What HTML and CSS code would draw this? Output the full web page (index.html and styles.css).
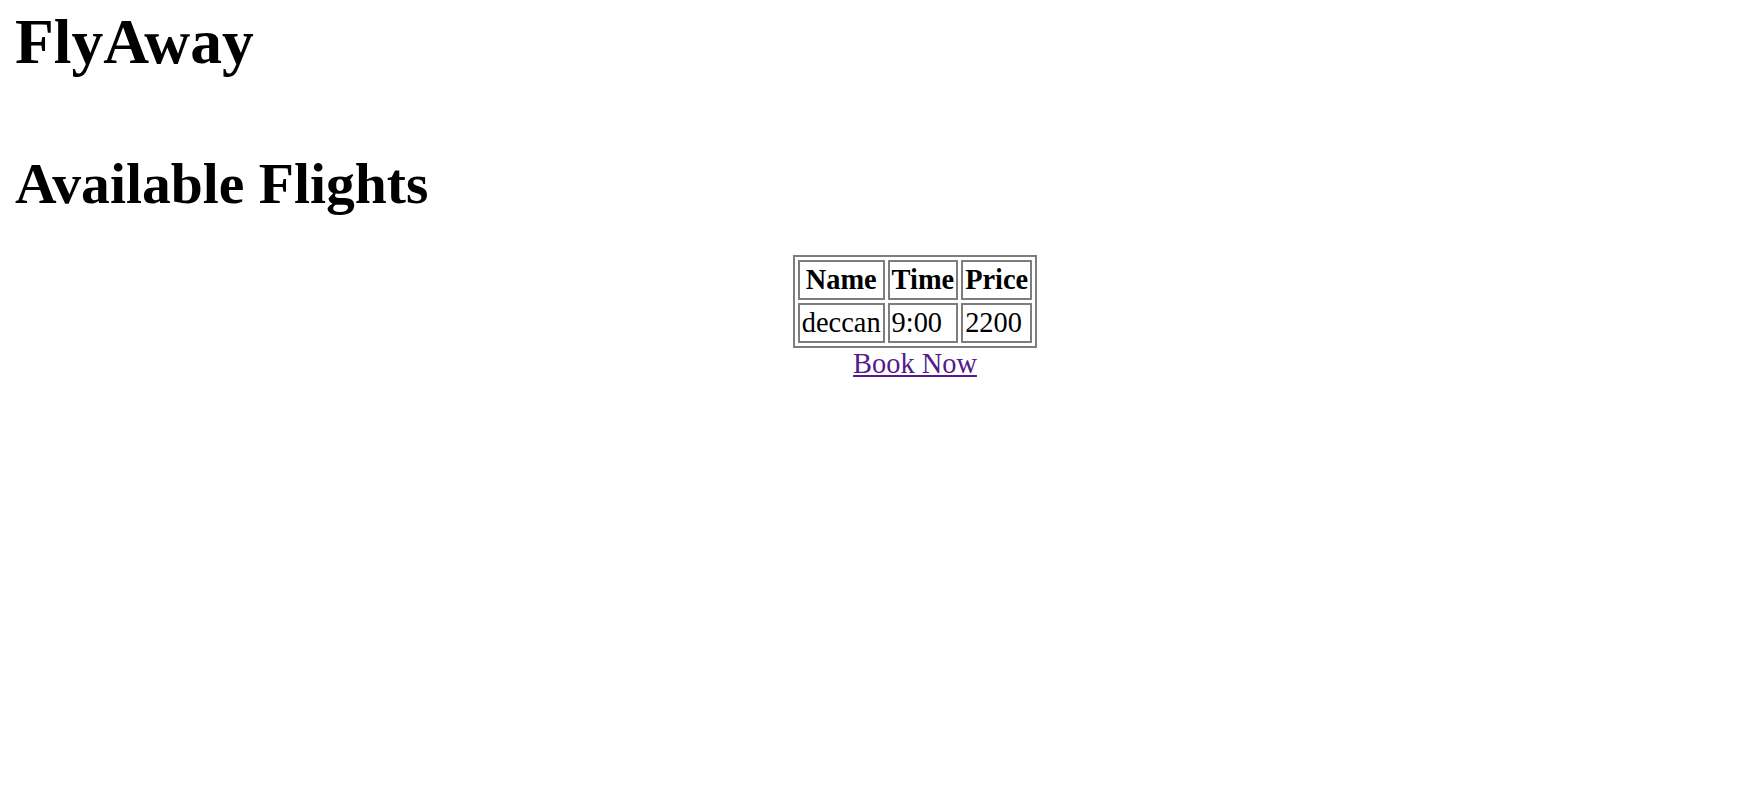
FILE: index.html
```html
<!DOCTYPE html>
<html>
<head>
<meta charset="utf-8">
<title>FlyAway</title>
<link rel="stylesheet" href="styles.css">
</head>
<body>
<div class="page">
  <h1 class="brand">FlyAway</h1>
  <h1 class="title">Available Flights</h1>
  <div class="flights">
    <table class="flight-table">
      <tr>
        <th>Name</th>
        <th>Time</th>
        <th>Price</th>
      </tr>
      <tr>
        <td>deccan</td>
        <td>9:00</td>
        <td>2200</td>
      </tr>
    </table>
    <a class="book" href="#">Book Now</a>
  </div>
</div>
</body>
</html>
```

FILE: styles.css
```css
html, body {
  margin: 0;
  padding: 0;
  background: #ffffff;
}

body {
  font-family: "Liberation Serif", "Times New Roman", serif;
  font-size: 28.4px;
  color: #000000;
}

.page {
  padding: 5px 0 0 15px;
}

.brand {
  font-size: 63.5px;
  font-weight: bold;
  margin: 0 0 72px 0;
}

.title {
  font-size: 57.6px;
  font-weight: bold;
  margin: 0 0 39px 0;
}

.flights {
  padding-left: 53px;
  text-align: center;
}

.flight-table {
  margin: 0 auto;
  border: 2px solid #7d7d7d;
  border-spacing: 3px;
  border-collapse: separate;
}

.flight-table th,
.flight-table td {
  border: 2px solid #7d7d7d;
  padding: 2px 2px;
}

.flight-table th {
  font-weight: bold;
  text-align: center;
}

.flight-table td {
  text-align: left;
}

.book {
  color: #551a8b;
  text-decoration: underline;
}
```
